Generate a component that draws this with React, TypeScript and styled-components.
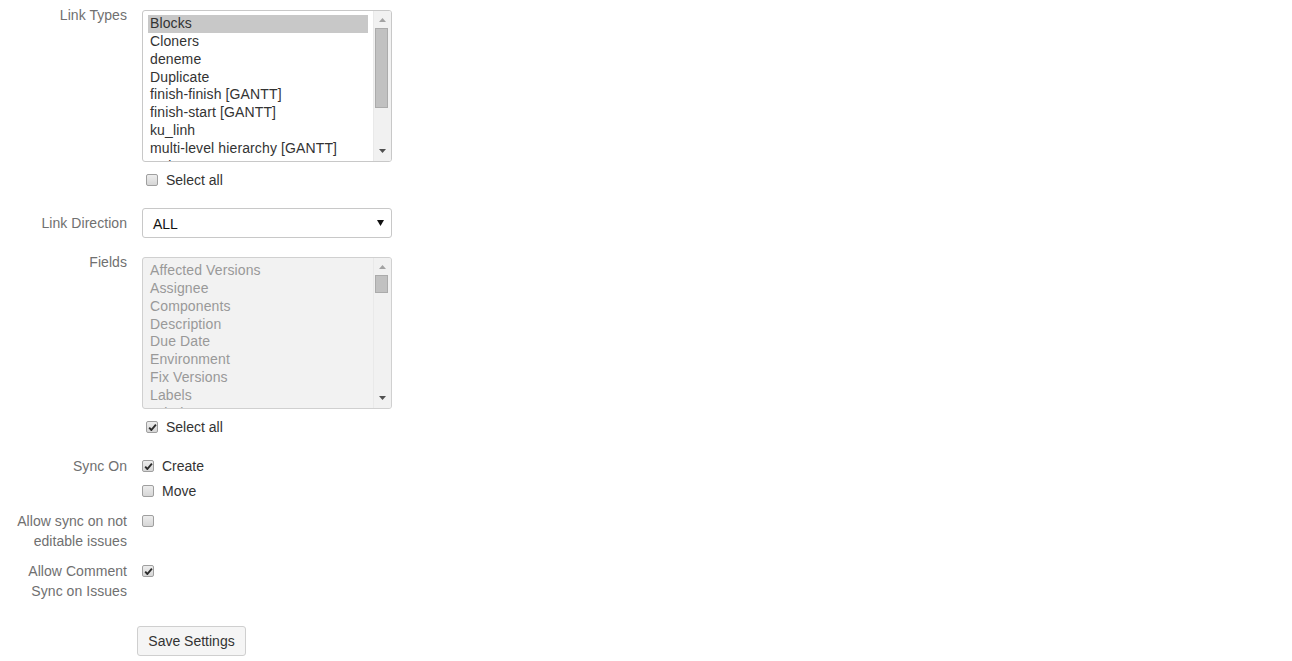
import React from "react";
import styled, { createGlobalStyle } from "styled-components";

const GlobalStyle = createGlobalStyle`
  html, body {
    margin: 0;
    padding: 0;
    background: #fff;
  }
  body {
    font-family: "Liberation Sans", Arial, sans-serif;
    font-size: 14px;
    color: #333;
  }
`;

const linkTypes = [
  "Blocks",
  "Cloners",
  "deneme",
  "Duplicate",
  "finish-finish [GANTT]",
  "finish-start [GANTT]",
  "ku_linh",
  "multi-level hierarchy [GANTT]",
  "Relates",
];

const fields = [
  "Affected Versions",
  "Assignee",
  "Components",
  "Description",
  "Due Date",
  "Environment",
  "Fix Versions",
  "Labels",
  "Priority",
];

const CheckMark = ({ checked }: { checked?: boolean }) => (
  <Box>
    {checked && (
      <svg width="9" height="9" viewBox="0 0 9 9">
        <path d="M1.2 4.6 L3.4 7 L7.9 1.6" fill="none" stroke="#2b2b2b" strokeWidth="1.9" strokeLinejoin="round" />
      </svg>
    )}
  </Box>
);

const Scrollbar = ({ thumbTop, thumbHeight }: { thumbTop: number; thumbHeight: number }) => (
  <Track>
    <svg width="17" height="150" viewBox="0 0 17 150">
      <path d="M5 11 L12 11 L8.5 7 Z" fill="#a3a3a3" />
      <path d="M5 138 L12 138 L8.5 142 Z" fill="#505050" />
    </svg>
    <Thumb style={{ top: thumbTop, height: thumbHeight }} />
  </Track>
);

const ListBox = ({ items, disabled, selected, thumbTop, thumbHeight }: { items: string[]; disabled?: boolean; selected?: number; thumbTop: number; thumbHeight: number }) => (
  <List $disabled={disabled}>
    <Options>
      {items.map((item, i) => (
        <Option key={item} $selected={i === selected} $disabled={disabled}>{item}</Option>
      ))}
    </Options>
    <Scrollbar thumbTop={thumbTop} thumbHeight={thumbHeight} />
  </List>
);

export default function App() {
  return (
    <>
      <GlobalStyle />
      <Form>
        <Row $top={5}>
          <Label>Link Types</Label>
          <Control $pad={5}>
            <ListBox items={linkTypes} selected={0} thumbTop={17} thumbHeight={80} />
            <SelectAll>
              <CheckMark />
              <CheckText>Select all</CheckText>
            </SelectAll>
          </Control>
        </Row>

        <Row $top={18}>
          <Label $pad={5}>Link Direction</Label>
          <Control>
            <Select>
              <span>ALL</span>
              <svg width="7" height="6" viewBox="0 0 7 6">
                <path d="M0 0 L7 0 L3.5 6 Z" fill="#111" />
              </svg>
            </Select>
          </Control>
        </Row>

        <Row $top={14}>
          <Label>Fields</Label>
          <Control $pad={5}>
            <ListBox items={fields} disabled thumbTop={17} thumbHeight={18} />
            <SelectAll>
              <CheckMark checked />
              <CheckText>Select all</CheckText>
            </SelectAll>
          </Control>
        </Row>

        <Row $top={19}>
          <Label>Sync On</Label>
          <Control>
            <CheckRow>
              <CheckMark checked />
              <CheckText>Create</CheckText>
            </CheckRow>
            <CheckRow $gap={5}>
              <CheckMark />
              <CheckText>Move</CheckText>
            </CheckRow>
          </Control>
        </Row>

        <Row $top={10}>
          <Label>Allow sync on not<br />editable issues</Label>
          <Control>
            <CheckRow>
              <CheckMark />
            </CheckRow>
          </Control>
        </Row>

        <Row $top={10}>
          <Label>Allow Comment<br />Sync on Issues</Label>
          <Control>
            <CheckRow>
              <CheckMark checked />
            </CheckRow>
          </Control>
        </Row>

        <Actions>
          <Button type="button">Save Settings</Button>
        </Actions>
      </Form>
    </>
  );
}

const Form = styled.form`
  display: flex;
  flex-direction: column;
  width: 1292px;
`;

const Row = styled.div<{ $top: number }>`
  display: grid;
  grid-template-columns: 127px 250px;
  column-gap: 15px;
  margin-top: ${(p) => p.$top}px;
  align-items: start;
`;

const Label = styled.label<{ $pad?: number }>`
  text-align: right;
  color: #707070;
  line-height: 20px;
  letter-spacing: 0.05px;
  padding-top: ${(p) => p.$pad || 0}px;
  white-space: nowrap;
`;

const Control = styled.div<{ $pad?: number }>`
  display: flex;
  flex-direction: column;
  padding-top: ${(p) => p.$pad || 0}px;
`;

const List = styled.div<{ $disabled?: boolean }>`
  position: relative;
  box-sizing: border-box;
  height: 152px;
  border: 1px solid ${(p) => (p.$disabled ? "#d0d0d0" : "#c8c8c8")};
  border-radius: 3px;
  background: ${(p) => (p.$disabled ? "#f2f2f2" : "#fff")};
  overflow: hidden;
  display: flex;
`;

const Options = styled.div`
  flex: 1;
  padding: 4px 5px 0 5px;
  overflow: hidden;
`;

const Option = styled.div<{ $selected?: boolean; $disabled?: boolean }>`
  line-height: 17.86px;
  padding-left: 2px;
  letter-spacing: 0.12px;
  white-space: nowrap;
  color: ${(p) => (p.$disabled ? "#999" : "#333")};
  background: ${(p) => (p.$selected ? "#c8c8c8" : "transparent")};
`;

const Track = styled.div`
  position: relative;
  width: 17px;
  flex: none;
  background: #f1f1f1;
  border-left: 1px solid #e9e9e9;
  svg {
    display: block;
  }
`;

const Thumb = styled.div`
  position: absolute;
  left: 1px;
  width: 13px;
  box-sizing: border-box;
  background: #c1c1c1;
  border: 1px solid #ababab;
`;

const SelectAll = styled.div`
  display: flex;
  align-items: center;
  gap: 8px;
  height: 20px;
  margin-top: 8px;
  padding-left: 4px;
`;

const CheckRow = styled.div<{ $gap?: number }>`
  display: flex;
  align-items: center;
  gap: 8px;
  height: 20px;
  margin-top: ${(p) => p.$gap || 0}px;
`;

const Box = styled.span`
  box-sizing: border-box;
  width: 12px;
  height: 12px;
  flex: none;
  display: flex;
  align-items: center;
  justify-content: center;
  border: 1px solid #9f9f9f;
  border-radius: 2px;
  background: linear-gradient(#ededed, #d6d6d6);
`;

const CheckText = styled.span`
  color: #333;
  line-height: 20px;
`;

const Select = styled.div`
  box-sizing: border-box;
  height: 30px;
  display: flex;
  align-items: center;
  justify-content: space-between;
  padding: 0 7px 0 10px;
  border: 1px solid #c8c8c8;
  border-radius: 3px;
  color: #111;
  span {
    padding-top: 2px;
  }
`;

const Actions = styled.div`
  margin-top: 25px;
  padding-left: 137px;
`;

const Button = styled.button`
  box-sizing: border-box;
  width: 109px;
  height: 30px;
  font-family: "Liberation Sans", Arial, sans-serif;
  font-size: 14px;
  color: #333;
  background: #f5f5f5;
  border: 1px solid #cfcfcf;
  border-radius: 3px;
  padding: 0;
`;
